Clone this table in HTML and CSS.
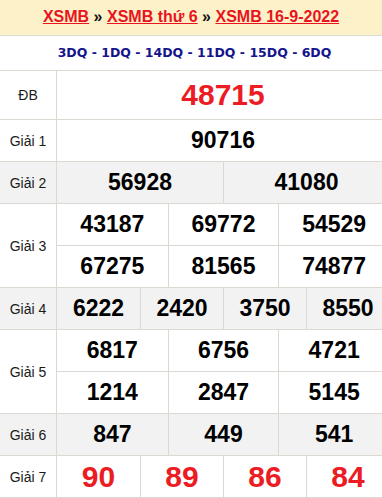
FILE: index.html
```html
<!DOCTYPE html>
<html lang="vi">
<head>
<meta charset="utf-8">
<title>XSMB 16-9-2022</title>
<link rel="stylesheet" href="styles.css">
</head>
<body>
<div class="crumbs">
  <a href="#">XSMB</a> <span class="sep">»</span> <a href="#">XSMB thứ 6</a> <span class="sep">»</span> <a href="#">XSMB 16-9-2022</a>
</div>
<div class="board">
  <div class="codes">3DQ - 1DQ - 14DQ - 11DQ - 15DQ - 6DQ</div>
  <div class="row special">
    <div class="label">ĐB</div>
    <div class="cells c1"><div class="cell red big">48715</div></div>
  </div>
  <div class="row">
    <div class="label">Giải 1</div>
    <div class="cells c1"><div class="cell">90716</div></div>
  </div>
  <div class="row alt">
    <div class="label">Giải 2</div>
    <div class="cells c2"><div class="cell">56928</div><div class="cell">41080</div></div>
  </div>
  <div class="row">
    <div class="label">Giải 3</div>
    <div class="cells c3">
      <div class="cell">43187</div><div class="cell">69772</div><div class="cell">54529</div>
      <div class="cell top">67275</div><div class="cell top">81565</div><div class="cell top">74877</div>
    </div>
  </div>
  <div class="row alt">
    <div class="label">Giải 4</div>
    <div class="cells c4"><div class="cell">6222</div><div class="cell">2420</div><div class="cell">3750</div><div class="cell">8550</div></div>
  </div>
  <div class="row">
    <div class="label">Giải 5</div>
    <div class="cells c3">
      <div class="cell">6817</div><div class="cell">6756</div><div class="cell">4721</div>
      <div class="cell top">1214</div><div class="cell top">2847</div><div class="cell top">5145</div>
    </div>
  </div>
  <div class="row alt">
    <div class="label">Giải 6</div>
    <div class="cells c3"><div class="cell">847</div><div class="cell">449</div><div class="cell">541</div></div>
  </div>
  <div class="row">
    <div class="label">Giải 7</div>
    <div class="cells c4"><div class="cell red big">90</div><div class="cell red big">89</div><div class="cell red big">86</div><div class="cell red big">84</div></div>
  </div>
</div>
</body>
</html>
```
FILE: styles.css
```css
html {
  overflow: hidden;
}
body {
  margin: 0;
  font-family: "Liberation Sans", Arial, sans-serif;
  background: #fff;
  color: #000;
}
.crumbs {
  background: #fcf1c9;
  border-bottom: 1px solid #dcd8d2;
  height: 35px;
  line-height: 34px;
  text-align: center;
  font-size: 16px;
  font-weight: bold;
}
.crumbs a {
  color: #e8141e;
  text-decoration: underline;
}
.crumbs .sep {
  color: #111;
}
.board {
  width: 389px;
}
.codes {
  height: 34px;
  line-height: 34px;
  text-align: center;
  font-family: "DejaVu Sans", Verdana, sans-serif;
  font-weight: bold;
  font-size: 12.5px;
  color: #14148c;
  border-bottom: 1px solid #dcd8d2;
}
.row {
  display: flex;
  border-bottom: 1px solid #dcd8d2;
}
.row.alt {
  background: #f2f2f2;
}
.label {
  width: 56px;
  flex: none;
  border-right: 1px solid #dcd8d2;
  display: flex;
  align-items: center;
  justify-content: center;
  font-size: 14px;
  color: #1a1a1a;
}
.cells {
  flex: 1;
  display: grid;
}
.c1 { grid-template-columns: 1fr; }
.c2 { grid-template-columns: repeat(2, 1fr); }
.c3 { grid-template-columns: repeat(3, 1fr); }
.c4 { grid-template-columns: repeat(4, 1fr); }
.cell {
  height: 41px;
  display: flex;
  align-items: center;
  justify-content: center;
  font-size: 23px;
  font-weight: bold;
  border-left: 1px solid #dcd8d2;
}
.c1 .cell,
.c2 .cell:nth-child(2n+1),
.c3 .cell:nth-child(3n+1),
.c4 .cell:nth-child(4n+1) {
  border-left: none;
}
.cell.top {
  border-top: 1px solid #dcd8d2;
}
.special .cell {
  height: 48px;
}
.red {
  color: #ec1c24;
}
.big {
  font-size: 30px;
}
```
